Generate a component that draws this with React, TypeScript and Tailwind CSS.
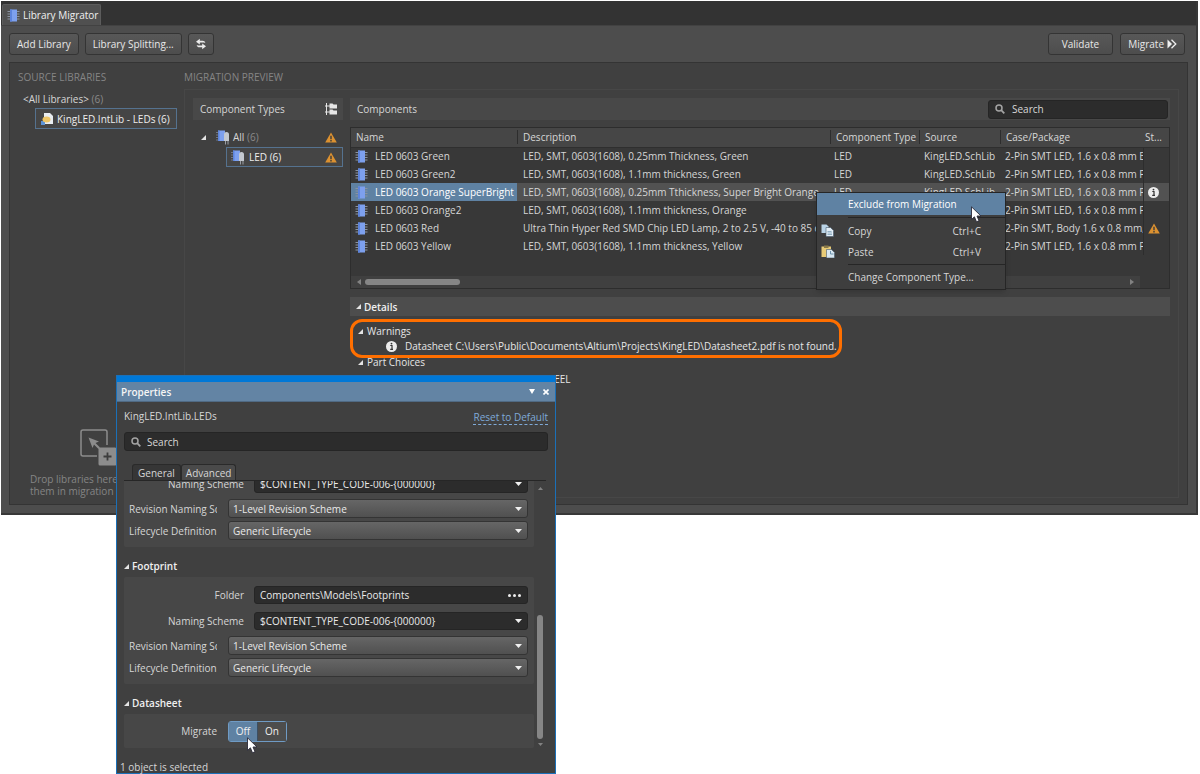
import React from "react";

type Row = {
	name: string;
	description: string;
	pkg: string;
	status?: "info" | "warning";
};

const rows: Row[] = [
	{
		name: "LED 0603 Green",
		description: "LED, SMT, 0603(1608), 0.25mm Thickness, Green",
		pkg: "2-Pin SMT LED, 1.6 x 0.8 mm Body",
	},
	{
		name: "LED 0603 Green2",
		description: "LED, SMT, 0603(1608), 1.1mm thickness, Green",
		pkg: "2-Pin SMT LED, 1.6 x 0.8 mm Package",
	},
	{
		name: "LED 0603 Orange SuperBright",
		description: "LED, SMT, 0603(1608), 0.25mm Tthickness, Super Bright Orange",
		pkg: "2-Pin SMT LED, 1.6 x 0.8 mm Package",
		status: "info",
	},
	{
		name: "LED 0603 Orange2",
		description: "LED, SMT, 0603(1608), 1.1mm thickness, Orange",
		pkg: "2-Pin SMT LED, 1.6 x 0.8 mm Package",
	},
	{
		name: "LED 0603 Red",
		description: "Ultra Thin Hyper Red SMD Chip LED Lamp, 2 to 2.5 V, -40 to 85 degC",
		pkg: "2-Pin SMT, Body 1.6 x 0.8 mm, Height",
		status: "warning",
	},
	{
		name: "LED 0603 Yellow",
		description: "LED, SMT, 0603(1608), 1.1mm thickness, Yellow",
		pkg: "2-Pin SMT LED, 1.6 x 0.8 mm Package",
	},
];

const SELECTED = 2;

/* Icons */

const ChipIcon = () => (
	<svg width="13" height="13" viewBox="0 0 13 13" className="shrink-0">
		<path d="M0.5 2.5h12M0.5 5h12M0.5 7.5h12M0.5 10h12" stroke="#8b93a0" strokeWidth="1" />
		<rect x="3" y="0.5" width="7" height="12" fill="#7da0ee" />
		<rect x="3" y="0.5" width="2" height="12" fill="#5d84dc" />
	</svg>
);

const TypeIcon = () => (
	<svg width="14" height="15" viewBox="0 0 14 15" className="shrink-0">
		<path d="M0 2.500h3M0 5h3M0 7.500h3M0 10h3" stroke="#7c8594" strokeWidth="0.800" />
		<rect x="2" y="0.500" width="7" height="10.500" fill="#7da0ee" />
		<rect x="2" y="0.500" width="1.500" height="10.500" fill="#5d84dc" />
		<path d="M8 11V4.500a2.500 2.500 0 0 1 5 0V11z" fill="#c3c8cf" />
		<path d="M9.500 11v3.500M12 11v3.500" stroke="#9a9fa6" />
	</svg>
);

const LibraryIcon = () => (
	<svg width="14" height="14" viewBox="0 0 14 14" className="shrink-0">
		<path d="M4 1h6l3 3v8H4z" fill="#e8ecf0" />
		<rect x="1" y="9" width="4" height="4" fill="#5b93d6" />
		<ellipse cx="6.500" cy="7.500" rx="4" ry="3" fill="#edc566" />
	</svg>
);

const WarningIcon = () => (
	<svg width="12" height="11" viewBox="0 0 12 11" className="shrink-0">
		<path d="M6 0.500L11.800 10.500H0.200z" fill="#dc9130" />
		<path d="M6 3.800v3.400M6 8v1.400" stroke="#3b3b3b" strokeWidth="1.400" />
	</svg>
);

const InfoIcon = () => (
	<svg width="11" height="11" viewBox="0 0 11 11" className="shrink-0">
		<circle cx="5.500" cy="5.500" r="5.500" fill="#ececec" />
		<path d="M4.300 4.500h1.700v3.500M4.200 8.300h2.800" stroke="#333" strokeWidth="1.200" fill="none" />
		<circle cx="5.500" cy="2.600" r="0.900" fill="#333" />
	</svg>
);

const HierarchyIcon = () => (
	<svg width="12" height="12" viewBox="0 0 12 12">
		<path d="M1.500 0v12M0 3h5M0 9h5" stroke="#e6e6e6" fill="none" />
		<path d="M4.500 0.500h3l1 1h3.500v4H4.500zM4.500 6.500h3l1 1h3.500v4H4.500z" fill="#e6e6e6" />
	</svg>
);

const RefreshIcon = () => (
	<svg width="10" height="12" viewBox="0 0 10 12">
		<path d="M0 3.700L3.800 0.800v1.900h2.700c1.600 0 2.500 0.900 2.800 2.300-0.900-0.500-1.600-0.600-2.800-0.600H3.800v2z" fill="#ececec" />
		<path d="M10 8.300L6.200 11.200V9.300H3.500C1.900 9.300 1 8.400 0.700 7c0.900 0.500 1.600 0.600 2.800 0.600h2.700v-2z" fill="#ececec" />
	</svg>
);

const ForwardIcon = () => (
	<svg width="10" height="10" viewBox="0 0 10 10">
		<path d="M0.500 0.500L5 5 0.500 9.500z" fill="#f0f0f0" />
		<path d="M4.500 0.800L8.800 5 4.500 9.200" stroke="#f0f0f0" strokeWidth="1.300" fill="none" />
	</svg>
);

const SearchIcon = () => (
	<svg width="10" height="10" viewBox="0 0 10 10" className="shrink-0">
		<circle cx="4" cy="4" r="3" stroke="#a4a4a4" strokeWidth="1.500" fill="none" />
		<path d="M6.200 6.200L9.300 9.300" stroke="#a4a4a4" strokeWidth="1.800" />
	</svg>
);

const Expander = () => (
	<svg width="5" height="5" viewBox="0 0 5 5" className="shrink-0">
		<path d="M5 0v5H0z" fill="#e4e4e4" />
	</svg>
);

const Cursor = ({ className }: { className: string }) => (
	<svg width="11" height="17" viewBox="0 0 11 17" className={className}>
		<path
			d="M0.500 0.800V13.500L3.400 10.800L5.500 15.800L8 14.800L6 10H10z"
			fill="#fff"
			stroke="#2a2a3a"
			strokeWidth="0.900"
		/>
	</svg>
);

const CopyIcon = () => (
	<svg width="13" height="13" viewBox="0 0 13 13">
		<path d="M0.500 0.500h5l2 2v6.500h-7z" fill="#b9d3e6" />
		<path d="M5 3.500h4.500l3 3v6H5z" fill="#e3eef6" stroke="#44586a" strokeWidth="0.600" />
		<path d="M6.500 7.500h4M6.500 9h4.500M6.500 10.500h4.500" stroke="#6d93ad" strokeWidth="0.700" />
	</svg>
);

const PasteIcon = () => (
	<svg width="14" height="13" viewBox="0 0 14 13">
		<path d="M0.500 1.500h9.500v10.500h-9.500z" fill="#e8cb76" />
		<path d="M3 0.500h4.500v2.500H3z" fill="#8a7a4a" />
		<path d="M5.500 4.500h5l3 3v5.500h-8z" fill="#d8e7f1" stroke="#44586a" strokeWidth="0.600" />
		<path d="M9.500 6v3h3" stroke="#6d93ad" fill="none" />
	</svg>
);

const DropIcon = () => (
	<svg width="37" height="37" viewBox="0 0 37 37">
		<path
			d="M17 27H3a2 2 0 0 1-2-2V3a2 2 0 0 1 2-2h22a2 2 0 0 1 2 2v13"
			stroke="#8c8c8c"
			strokeWidth="1.500"
			fill="none"
		/>
		<path d="M8.500 8.500L19 12.500L15.500 14L20 18.500L18.500 20L14 15.500L12.500 19z" fill="#8c8c8c" />
		<rect x="18.500" y="18.500" width="18" height="18" rx="1.500" fill="#8c8c8c" />
		<path d="M27.500 23.500v8M23.500 27.500h8" stroke="#3d3d3d" strokeWidth="1.800" />
	</svg>
);

/* Shared controls */

const ToolButton = ({ children, label }: { children: React.ReactNode; label?: string }) => (
	<button
		aria-label={label}
		className="flex h-[22px] items-center gap-[3px] rounded-[3px] border border-[#343434] bg-linear-to-b from-[#585858] to-[#4d4d4d] px-[7px] text-[#e8e8e8]">
		{children}
	</button>
);

const Caret = () => (
	<svg width="7" height="4" viewBox="0 0 7 4" className="pointer-events-none absolute top-1/2 right-1.5 -mt-0.5">
		<path d="M0 0h7L3.500 4z" fill="#f0f0f0" />
	</svg>
);

const fieldDark = "rounded-[3px] border border-[#252525] bg-[#2c2c2c]";

const SchemeField = ({ id }: { id: string }) => (
	<div className="flex items-center gap-2.5">
		<label htmlFor={id} className="w-[115px] shrink-0 text-right">
			Naming Scheme
		</label>
		<div className="relative flex-1">
			<select
				id={id}
				className={`block h-[18px] w-full appearance-none px-[5px] text-[#eaeaea] ${fieldDark}`}>
				<option>{"$CONTENT_TYPE_CODE-006-{000000}"}</option>
			</select>
			<Caret />
		</div>
	</div>
);

const SelectField = ({ id, label, value }: { id: string; label: string; value: string }) => (
	<div className="flex items-center gap-[11px]">
		<label htmlFor={id} className="w-[88px] shrink-0 overflow-hidden whitespace-nowrap">
			{label}
		</label>
		<div className="relative flex-1">
			<select
				id={id}
				className="block h-[19px] w-full appearance-none rounded-[3px] border border-[#343434] bg-linear-to-b from-[#666] to-[#505050] px-1 text-[#eaeaea]">
				<option>{value}</option>
			</select>
			<Caret />
		</div>
	</div>
);

const SchemeSelects = ({ prefix }: { prefix: string }) => (
	<div className="mt-1.5 flex flex-col gap-[3px]">
		<SelectField id={`${prefix}-revision`} label="Revision Naming Scheme" value="1-Level Revision Scheme" />
		<SelectField id={`${prefix}-lifecycle`} label="Lifecycle Definition" value="Generic Lifecycle" />
	</div>
);

const GroupTitle = ({ children }: { children: React.ReactNode }) => (
	<h3 className="flex h-[30px] shrink-0 items-center gap-[3px] pt-2 font-semibold text-[#f0f0f0]">
		<Expander />
		{children}
	</h3>
);

/* Main window */

const SourceLibraries = () => (
	<aside className="flex w-[174px] shrink-0 flex-col pt-1.5 pl-2">
		<h2 className="h-4 text-[#858585]">SOURCE LIBRARIES</h2>
		<div className="mt-1.5 h-4 pl-[5px]">
			&lt;All Libraries&gt; <span className="text-[#8a8a8a]">(6)</span>
		</div>
		<button className="mt-px ml-[17px] flex h-[21px] w-[142px] items-center gap-[3px] border border-[#55728f] bg-[#454545] pl-1 whitespace-nowrap text-[#ededed]">
			<LibraryIcon />
			KingLED.IntLib - LEDs (6)
		</button>
		<div className="mt-auto mb-[7px] text-[#858585]">
			<div className="pl-[62px]">
				<DropIcon />
			</div>
			<p className="mt-[7px] pl-3 leading-3 whitespace-nowrap">
				Drop libraries here to include
				<br />
				them in migration
			</p>
		</div>
	</aside>
);

const ComponentTypes = () => (
	<div className="w-[150px] shrink-0">
		<div className="flex h-[22px] items-center justify-between bg-[#484848] pr-1.5 pl-[7px]">
			<h3>Component Types</h3>
			<HierarchyIcon />
		</div>
		<div className="mt-[7px] flex h-5 items-center pr-1.5 pl-2">
			<Expander />
			<span className="w-2.5" />
			<TypeIcon />
			<span className="ml-[3px] flex-1">
				All <span className="text-[#8a8a8a]">(6)</span>
			</span>
			<WarningIcon />
		</div>
		<button className="ml-[33px] flex h-5 w-[117px] items-center border border-[#55728f] bg-[#454545] pr-[5px] pl-1 text-[#ededed]">
			<TypeIcon />
			<span className="ml-1 flex-1 text-left">LED (6)</span>
			<WarningIcon />
		</button>
	</div>
);

const ComponentTable = () => (
	<div className="mt-[7px] border border-[#2d2d2d] bg-[#383838]">
		<table className="w-full table-fixed text-left whitespace-nowrap">
			<colgroup>
				<col className="w-[166px]" />
				<col />
				<col className="w-[89px]" />
				<col className="w-[81px]" />
				<col className="w-[143px]" />
				<col className="w-[26px]" />
			</colgroup>
			<thead>
				<tr className="h-[19px] bg-[#464646]">
					{["Name", "Description", "Component Type", "Source", "Case/Package"].map((title) => (
						<th key={title} className="border-b border-[#2f2f2f] p-0 font-normal">
							<div
								className={
									title === "Name"
										? "h-3.5 pl-[5px] leading-3.5"
										: "h-3.5 border-l border-[#2d2d2d] pl-[5px] leading-3.5"
								}>
								{title}
							</div>
						</th>
					))}
					<th className="border-b border-[#2f2f2f] p-0 pl-0.5 font-normal">St...</th>
				</tr>
			</thead>
			<tbody>
				{rows.map((row, index) => {
					const selected = index === SELECTED;
					return (
						<tr key={row.name} className={selected ? "h-[18px] bg-[#525252]" : "h-[18px]"}>
							<td className={selected ? "bg-[#5f82a3] p-0 text-white" : "p-0"}>
								<div className="flex items-center gap-[7px] pl-1">
									<ChipIcon />
									{row.name}
								</div>
							</td>
							<td className="overflow-hidden p-0 pl-1.5">{row.description}</td>
							<td className="p-0 pl-1">LED</td>
							<td className="p-0 pl-[5px]">KingLED.SchLib</td>
							<td className="overflow-hidden border-r border-[#2d2d2d] p-0 pl-[5px]">{row.pkg}</td>
							<td className="p-0 pl-1">
								{row.status === "info" && <InfoIcon />}
								{row.status === "warning" && <WarningIcon />}
							</td>
						</tr>
					);
				})}
			</tbody>
		</table>
		<div className="mt-[21px] mr-[29px] flex h-3 items-center bg-[#404040] px-1.5">
			<svg width="4" height="6" viewBox="0 0 4 6">
				<path d="M4 0v6L0 3z" fill="#828282" />
			</svg>
			<div className="ml-1 h-1.5 w-[95px] rounded-full bg-[#868686]" />
			<svg width="4" height="6" viewBox="0 0 4 6" className="ml-auto">
				<path d="M0 0v6l4-3z" fill="#828282" />
			</svg>
		</div>
	</div>
);

const Details = () => (
	<section className="mt-2">
		<h3 className="flex h-[19px] items-center gap-[3px] bg-[#4d4d4d] pl-1.5 font-semibold text-[#f0f0f0]">
			<Expander />
			Details
		</h3>
		<div className="relative mt-[7px] text-[#e6e6e6]">
			<div className="flex h-4 items-center gap-1 pl-2">
				<Expander />
				Warnings
			</div>
			<div className="flex h-3.5 items-center gap-2 pl-9">
				<InfoIcon />
				{"Datasheet C:\\Users\\Public\\Documents\\Altium\\Projects\\KingLED\\Datasheet2.pdf is not found."}
			</div>
			<div className="flex h-[18px] items-center gap-1 pl-2">
				<Expander />
				Part Choices
			</div>
			<div className="h-4 pl-[198px]">REEL</div>
			<div className="absolute -top-1 left-0 h-[39px] w-[492px] rounded-xl border-3 border-[#ff6f00]" />
		</div>
	</section>
);

const MigrationPreview = () => (
	<section className="flex min-w-0 flex-1 flex-col pt-1.5 pr-2">
		<h2 className="h-4 text-[#858585]">MIGRATION PREVIEW</h2>
		<div className="mt-1 mb-1.5 flex flex-1 gap-[7px] border border-[#474747] p-2">
			<ComponentTypes />
			<div className="min-w-0 flex-1">
				<div className="flex h-[22px] items-center justify-between bg-[#484848] pr-0.5 pl-[7px]">
					<h3>Components</h3>
					<label className={`flex h-[19px] w-[180px] items-center gap-[7px] px-1.5 ${fieldDark}`}>
						<SearchIcon />
						<input
							aria-label="Search components"
							placeholder="Search"
							className="w-full placeholder:text-[#d8d8d8]"
						/>
					</label>
				</div>
				<ComponentTable />
				<Details />
			</div>
		</div>
	</section>
);

const MigratorWindow = () => (
	<main className="mt-px mr-0.5 ml-px border-r-2 border-b-2 border-[#383838] bg-[#4d4d4d]">
		<div className="flex h-6 items-end bg-[#333] pl-px">
			<button className="flex h-[21px] items-center gap-[3px] rounded-t-[2px] border border-b-0 border-[#5c5c5c] bg-[#505050] pr-0.5 pl-1 text-[#f0f0f0]">
				<ChipIcon />
				Library Migrator
			</button>
		</div>
		<div className="flex items-center gap-1.5 border-t border-[#424242] py-[7px] pr-[11px] pl-2">
			<ToolButton>Add Library</ToolButton>
			<ToolButton>Library Splitting...</ToolButton>
			<ToolButton label="Refresh">
				<RefreshIcon />
			</ToolButton>
			<div className="ml-auto flex gap-[7px]">
				<ToolButton>
					<span className="px-[6px]">Validate</span>
				</ToolButton>
				<ToolButton>
					Migrate
					<ForwardIcon />
				</ToolButton>
			</div>
		</div>
		<div className="mr-2 mb-2 ml-2 flex min-h-[443px] border border-[#343434] bg-[#404040]">
			<SourceLibraries />
			<MigrationPreview />
		</div>
	</main>
);

const ContextMenu = () => (
	<div
		role="menu"
		className="absolute top-[192px] left-[816px] w-[190px] border border-[#262626] bg-[#3e3e3e] shadow-md">
		<button role="menuitem" className="block h-[22px] w-full bg-[#5f82a3] pl-[31px] text-left text-white">
			Exclude from Migration
		</button>
		<div className="mt-0.5 ml-[31px] h-px bg-[#262626]" />
		<button role="menuitem" className="mt-0.5 flex h-[21px] w-full items-center pr-6 pl-1">
			<span className="w-[27px]">
				<CopyIcon />
			</span>
			Copy
			<span className="ml-auto">Ctrl+C</span>
		</button>
		<button role="menuitem" className="flex h-[21px] w-full items-center pr-6 pl-1">
			<span className="w-[27px]">
				<PasteIcon />
			</span>
			Paste
			<span className="ml-auto">Ctrl+V</span>
		</button>
		<div className="mt-0.5 ml-[31px] h-px bg-[#262626]" />
		<button role="menuitem" className="block h-6 w-full pl-[31px] text-left">
			Change Component Type...
		</button>
		<Cursor className="absolute top-[13px] left-[154px]" />
	</div>
);

const PropertiesPanel = () => (
	<section className="absolute top-[375px] left-[116px] w-[440px] border border-[#1b70b8] bg-[#404040]">
		<div className="h-1.5 bg-[#0078d7]" />
		<header className="flex h-5 items-center border-b border-[#506a84] bg-[#6384a4] pr-1.5 pl-1 text-[#f5f5f5]">
			<h2 className="flex-1 font-semibold">Properties</h2>
			<button aria-label="Panel menu" className="mr-2">
				<svg width="6" height="5" viewBox="0 0 6 5">
					<path d="M0 0h6L3 5z" fill="#fff" />
				</svg>
			</button>
			<button aria-label="Close">
				<svg width="6" height="6" viewBox="0 0 6 6">
					<path d="M0.500 0.500l5 5M5.500 0.500l-5 5" stroke="#fff" strokeWidth="1.600" />
				</svg>
			</button>
		</header>
		<div className="mt-1.5 flex items-start justify-between pr-[7px] pl-[7px]">
			<span>KingLED.IntLib.LEDs</span>
			<a href="#reset" className="mt-0.5 border-b border-dashed border-[#7faad8] leading-3.5 text-[#7faad8]">
				Reset to Default
			</a>
		</div>
		<label className={`mx-[7px] mt-[7px] flex h-[19px] items-center gap-1.5 px-1.5 ${fieldDark}`}>
			<SearchIcon />
			<input aria-label="Search properties" placeholder="Search" className="w-full placeholder:text-[#d8d8d8]" />
		</label>
		<div role="tablist" className="mr-[9px] ml-[7px] flex border-b border-[#262626] pt-[13px] pl-2">
			<button role="tab" aria-selected="false" className="h-4 rounded-t-[3px] border border-b-0 border-[#2a2a2a] bg-[#363636] px-[5px]">
				General
			</button>
			<button role="tab" aria-selected="true" className="h-4 rounded-t-[3px] border border-b-0 border-[#2a2a2a] bg-[#4a4a4a] px-1">
				Advanced
			</button>
		</div>
		<div className="flex pl-[7px]">
			{/* scrolled to the end, so the first group is cut at the top */}
			<div className="flex h-[267px] w-[410px] flex-col justify-end overflow-hidden">
				<div className="shrink-0 rounded-[2px] bg-[#474747] pr-1.5 pb-[7px] pl-[5px]">
					<SchemeField id="symbol-scheme" />
					<SchemeSelects prefix="symbol" />
				</div>
				<GroupTitle>Footprint</GroupTitle>
				<div className="shrink-0 rounded-[2px] bg-[#474747] pt-[9px] pr-1.5 pb-[7px] pl-[5px]">
					<div className="mb-2 flex items-center gap-2.5">
						<label htmlFor="footprint-folder" className="w-[115px] shrink-0 text-right">
							Folder
						</label>
						<div className={`flex h-[18px] flex-1 items-center pr-1.5 pl-[5px] ${fieldDark}`}>
							<input
								id="footprint-folder"
								defaultValue="Components\Models\Footprints"
								className="min-w-0 flex-1 text-[#eaeaea]"
							/>
							<button aria-label="Browse" className="flex gap-0.5">
								<span className="size-[3px] rounded-full bg-[#eee]" />
								<span className="size-[3px] rounded-full bg-[#eee]" />
								<span className="size-[3px] rounded-full bg-[#eee]" />
							</button>
						</div>
					</div>
					<SchemeField id="footprint-scheme" />
					<SchemeSelects prefix="footprint" />
				</div>
				<GroupTitle>Datasheet</GroupTitle>
				<div className="flex h-[34px] shrink-0 items-center gap-[11px] rounded-[2px] bg-[#474747] pl-[5px]">
					<span id="migrate-label" className="w-[88px] text-right">
						Migrate
					</span>
					<div
						role="group"
						aria-labelledby="migrate-label"
						className="flex h-[21px] w-[59px] rounded-[3px] border border-[#6f9bc5] text-[#f0f0f0]">
						<button aria-pressed="true" className="flex-1 border-r border-[#3c4f62] bg-[#5f82a3]">
							Off
						</button>
						<button aria-pressed="false" className="flex-1 bg-[#4d4d4d]">
							On
						</button>
					</div>
				</div>
			</div>
			<div className="flex w-3 flex-col items-center pt-1.5">
				<svg width="5" height="3" viewBox="0 0 5 3">
					<path d="M0 3h5L2.500 0z" fill="#828282" />
				</svg>
				<div className="mt-auto h-[124px] w-1.5 rounded-full bg-[#868686]" />
				<svg width="5" height="3" viewBox="0 0 5 3" className="mt-1 mb-0.5">
					<path d="M0 0h5L2.500 3z" fill="#828282" />
				</svg>
			</div>
		</div>
		<footer className="mt-[11px] h-3.5 pl-[3px]">1 object is selected</footer>
		<Cursor className="absolute top-[361px] left-[130px]" />
	</section>
);

const App = () => (
	<div className="relative min-h-screen overflow-hidden bg-white font-['Open_Sans','Noto_Sans',sans-serif] text-[10px] leading-4 text-[#d6d6d6]">
		<MigratorWindow />
		<ContextMenu />
		<PropertiesPanel />
	</div>
);

export default App;
